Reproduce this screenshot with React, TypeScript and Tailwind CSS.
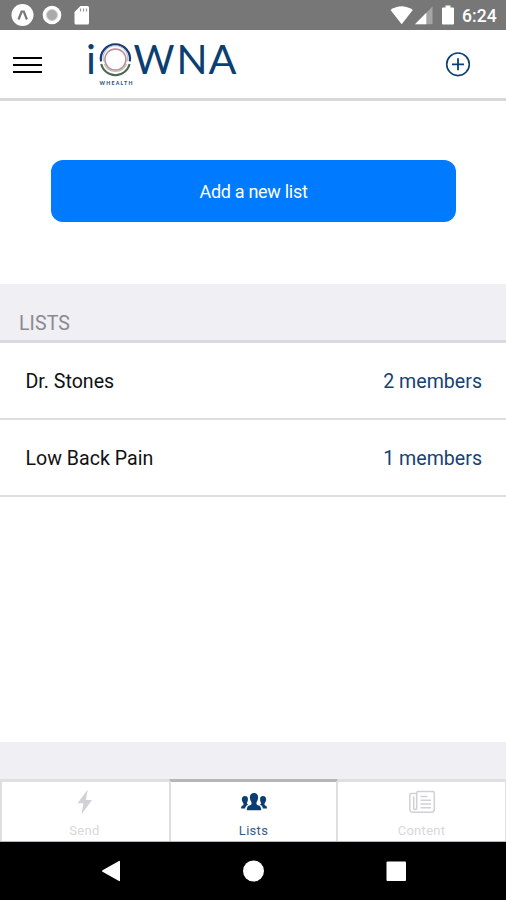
import React from "react";

const lists = [
  { name: "Dr. Stones", members: 2 },
  { name: "Low Back Pain", members: 1 },
];

function StatusBar() {
  return (
    <div className="flex h-[30px] shrink-0 items-center justify-between bg-[#777777] pr-[9px] pl-[11px] text-white">
      <svg width="80" height="30" viewBox="0 0 80 30">
        <circle cx="11.5" cy="15" r="11" fill="#fff" />
        <path d="M7.500 19.500 10.600 11.500H12.800L15.900 19.500" fill="none" stroke="#777" strokeWidth="2.200" />
        <circle cx="41" cy="15" r="9.300" fill="#fff" />
        <circle cx="41" cy="15" r="5.500" fill="#aaa" stroke="#cfcfcf" strokeWidth="1" />
        <path d="M69.500 6H76.500Q78 6 78 7.500V23Q78 24.500 76.500 24.500H65Q63.500 24.500 63.500 23V12Z" fill="#fff" />
        <path d="M69.500 8.500v3M72.500 8.500v3M75.500 8.500v3" stroke="#999" strokeWidth="1.200" />
      </svg>
      <div className="flex items-center">
        <svg width="72" height="30" viewBox="390 0 72 30">
          <path d="M390.500 10Q401.500 2.500 412.800 10L401.700 24.200Z" fill="#fff" />
          <path d="M432.500 6.500V24.200H415Z" fill="#a5a5a5" />
          <path d="M426.300 12.800V24.200H415Z" fill="#fff" />
          <path d="M445.500 5.500h5v2h2.500q1 0 1 1V23.500q0 1-1 1h-10q-1 0-1-1V8.500q0-1 1-1h2.500Z" fill="#fff" />
        </svg>
        <span className="w-[35px] pt-[2px] text-[17.500px] leading-[28px] font-medium tracking-[0.100px] whitespace-nowrap">6:24</span>
      </div>
    </div>
  );
}

function Logo() {
  return (
    <svg className="overflow-visible" width="160" height="68" viewBox="82 30 160 68">
      <g fill="#0b3f72" fontFamily="Lato, sans-serif" fontSize="41.500">
        <text x="86" y="74">i</text>
        <text x="133.500" y="74" textLength="41" lengthAdjust="spacingAndGlyphs">W</text>
        <text x="176.500" y="74" textLength="31" lengthAdjust="spacingAndGlyphs">N</text>
        <text x="208.500" y="74" textLength="28" lengthAdjust="spacingAndGlyphs">A</text>
      </g>
      <g fill="none">
        <path d="M101 61.400A14.600 14.600 0 1 1 129.800 61.400" stroke="#173a7a" strokeWidth="2.200" />
        <path d="M101.200 64A14.600 14.600 0 0 0 129.600 64" stroke="#48684f" strokeWidth="2" />
        <path d="M103.700 61.400A12.200 12.200 0 1 1 127.100 61.400" stroke="#b9c3d4" strokeWidth="1.200" />
        <path d="M104.200 64A12.200 12.200 0 0 0 126.600 64" stroke="#b4c5b1" strokeWidth="1.200" />
        <circle cx="115.400" cy="59.500" r="10.500" stroke="#c08c97" strokeWidth="1.500" />
      </g>
      <text x="99.500" y="85" textLength="33" fill="#28567e" fontFamily="Lato, sans-serif" fontWeight="900" fontSize="5.200">WHEALTH</text>
    </svg>
  );
}

function Header() {
  return (
    <header className="flex h-[71px] shrink-0 items-center border-b-[3px] border-[#d7d8d8] bg-white pl-[13px]">
      <div className="flex w-[29px] flex-col gap-[5px] pt-px">
        <span className="h-[2px] bg-black" />
        <span className="h-[2px] bg-black" />
        <span className="h-[2px] bg-black" />
      </div>
      <div className="ml-[40px]">
        <Logo />
      </div>
      <svg className="ml-auto mr-[35px]" width="26" height="26" viewBox="0 0 26 26" fill="none" stroke="#0b3f72">
        <circle cx="13" cy="13.300" r="11.300" strokeWidth="1.600" />
        <path d="M13 7.300v12M7 13.300h12" strokeWidth="1.800" />
      </svg>
    </header>
  );
}

function BoltIcon() {
  return (
    <svg width="30" height="28" viewBox="0 0 30 28">
      <path d="M17.800 1.500 7.500 15.300H13.400L11.500 26.300 22 11.900H15.800Z" fill="#d0d1d5" />
    </svg>
  );
}

function PeopleIcon() {
  return (
    <svg width="30" height="28" viewBox="0 0 30 28" fill="#0b3f72">
      <path d="M15 5C17.900 5 19.300 7 19.100 10 19 12.300 17.900 13.100 17.500 14.400 17.200 16.500 18 17 19.900 17.600 21.500 18.300 22 19.400 22.200 22.300H7.800C8 19.400 8.500 18.300 10.100 17.600 12 17 12.800 16.500 12.500 14.400 12.100 13.100 11 12.300 10.900 10 10.700 7 12.100 5 15 5Z" />
      <path d="M6 8C8.300 8 9.200 9.600 8.900 12 8.800 13.500 8 14.200 8 15.300 8 16 8.500 16.300 9.100 16.500 7.300 17.300 6.500 18.300 6.100 20.500H2C2.100 18.400 2.400 17.900 3.600 17.400 4.500 17.100 4.700 16.500 4.400 15.400 4 14.300 3.100 13.600 2.900 12 2.700 9.500 3.800 8 6 8Z" />
      <path d="M24 8C21.700 8 20.800 9.600 21.100 12 21.200 13.500 22 14.200 22 15.300 22 16 21.500 16.300 20.900 16.500 22.700 17.300 23.500 18.300 23.900 20.500H28C27.900 18.400 27.600 17.900 26.400 17.400 25.500 17.100 25.300 16.500 25.600 15.400 26 14.300 26.900 13.600 27.100 12 27.300 9.500 26.200 8 24 8Z" />
    </svg>
  );
}

function NewspaperIcon() {
  return (
    <svg width="30" height="28" viewBox="0 0 30 28" fill="none" stroke="#d0d1d5" strokeWidth="1.500">
      <path d="M11 3.500H26Q27.300 3.500 27.300 4.800V21Q27.300 24.300 24.500 24.300H6Q2.800 24.300 2.800 21V7Q2.800 5.500 4.300 5.500H9.700V4.800Q9.700 3.500 11 3.500Z" />
      <path d="M9.700 5.500V20.300Q9.700 21.500 8.200 21.500T6.700 20.300V8.500M13.500 8.500H20.500M13.500 12.200H24M13.500 16H24M13.500 19.700H24" />
    </svg>
  );
}

export default function App() {
  return (
    <div className="flex h-[900px] w-[506px] flex-col overflow-hidden bg-white font-[Roboto,sans-serif]">
      <StatusBar />
      <Header />
      <main className="flex flex-1 flex-col">
        <div className="flex h-[183px] justify-center pt-[59px] pl-px">
          <button className="h-[62px] w-[405px] rounded-[12px] bg-[#007aff] pt-px text-[18px] tracking-[-0.300px] text-white">
            Add a new list
          </button>
        </div>
        <h2 className="flex h-[59px] items-end border-b-[3px] border-[#d9d9de] bg-[#efeff4] pb-[3px] pl-[19px] text-[19.500px] leading-[27px] tracking-[0.100px] text-[#8a8a8f]">
          LISTS
        </h2>
        {lists.map((list) => (
          <div
            key={list.name}
            className="flex h-[77px] items-center justify-between border-b-2 border-[#dedede] pt-[2px] pr-[24px] pl-[25.500px] text-[19.600px]"
          >
            <span className="text-[#111111]">{list.name}</span>
            <span className="text-[#174273]">{list.members} members</span>
          </div>
        ))}
      </main>
      <div className="h-[37px] shrink-0 bg-[#efeff4]" />
      <nav className="grid h-[63px] shrink-0 grid-cols-[169px_169px_168px] border-b border-[#b5b6ba] bg-white text-[13px]">
        <div className="flex flex-col items-center border-t-[3px] border-l-2 border-[#dfdfe3] pt-[6px] pr-[2px] text-[#d7d8dc]">
          <BoltIcon />
          <span className="mt-[6px] leading-[18px] tracking-[0.300px]">Send</span>
        </div>
        <div className="flex flex-col items-center border-t-[3px] border-r-2 border-l-2 border-x-[#dfdfe3] border-t-[#b5b6ba] pt-[6px] text-[#3a5c84]">
          <PeopleIcon />
          <span className="mt-[6px] leading-[18px] tracking-[0.300px]">Lists</span>
        </div>
        <div className="flex flex-col items-center border-t-[3px] border-r border-[#dfdfe3] pt-[6px] text-[#d7d8dc]">
          <NewspaperIcon />
          <span className="mt-[6px] leading-[18px] tracking-[0.300px]">Content</span>
        </div>
      </nav>
      <div className="h-[58px] shrink-0 bg-black">
        <svg width="506" height="58" viewBox="0 842 506 58" fill="#fff">
          <path d="M102.500 870.300 119 861Q120 860.500 120 861.800V880.200Q120 881.500 119 881L102.500 871.700Q101.500 871 102.500 870.300Z" />
          <circle cx="253.500" cy="871" r="10.500" />
          <rect x="386.500" y="861.500" width="19.500" height="19.500" rx="1" />
        </svg>
      </div>
    </div>
  );
}
